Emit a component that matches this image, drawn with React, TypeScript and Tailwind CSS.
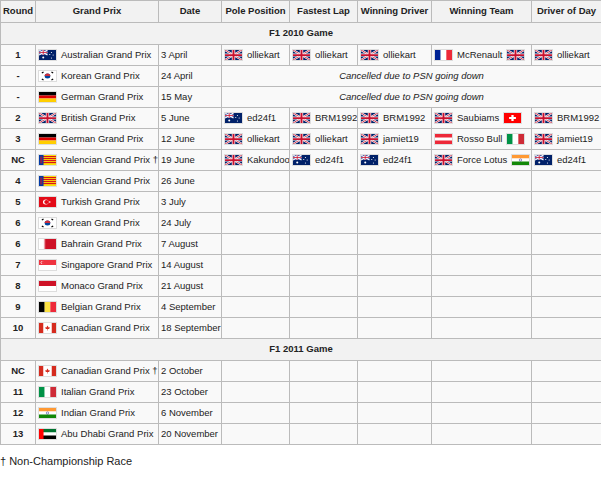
import React from "react";

const W = 19, H = 12;
function Flag({ c }: { c: string }) {
  const box = (children: React.ReactNode) => (
    <svg width={W} height={H} viewBox="0 0 30 20" className="inline-block align-middle border border-[#ddd] shrink-0" preserveAspectRatio="none">{children}</svg>
  );
  switch (c) {
    case "gb": return box(<>
      <rect width="30" height="20" fill="#012169" />
      <path d="M0 0L30 20M30 0L0 20" stroke="#fff" strokeWidth="4" />
      <path d="M0 0L30 20M30 0L0 20" stroke="#C8102E" strokeWidth="1.5" />
      <path d="M15 0V20M0 10H30" stroke="#fff" strokeWidth="6" />
      <path d="M15 0V20M0 10H30" stroke="#C8102E" strokeWidth="3.5" />
    </>);
    case "au": return box(<>
      <rect width="30" height="20" fill="#012169" />
      <rect width="15" height="10" fill="#3b4a9a" />
      <path d="M0 0L15 10M15 0L0 10" stroke="#fff" strokeWidth="2" />
      <path d="M7.5 0V10M0 5H15" stroke="#fff" strokeWidth="3" />
      <path d="M7.5 0V10M0 5H15" stroke="#C8102E" strokeWidth="1.5" />
      <circle cx="7.5" cy="15" r="1.8" fill="#fff" /><circle cx="22" cy="5" r="1" fill="#fff" /><circle cx="25" cy="10" r="1" fill="#fff" /><circle cx="22" cy="16" r="1" fill="#fff" /><circle cx="19" cy="9" r="1" fill="#fff" />
    </>);
    case "kr": return box(<>
      <rect width="30" height="20" fill="#fff" />
      <circle cx="15" cy="10" r="5" fill="#0047A0" /><path d="M10 10A5 5 0 0 1 20 10Z" fill="#CD2E3A" />
      <path d="M5 4l3-2M5 16l3 2M25 4l-3-2M25 16l-3 2" stroke="#000" strokeWidth="2" />
    </>);
    case "de": return box(<><rect width="30" height="7" fill="#000" /><rect y="7" width="30" height="6" fill="#DD0000" /><rect y="13" width="30" height="7" fill="#FFCE00" /></>);
    case "fr": return box(<><rect width="10" height="20" fill="#002395" /><rect x="10" width="10" height="20" fill="#fff" /><rect x="20" width="10" height="20" fill="#ED2939" /></>);
    case "it": return box(<><rect width="10" height="20" fill="#009246" /><rect x="10" width="10" height="20" fill="#fff" /><rect x="20" width="10" height="20" fill="#CE2B37" /></>);
    case "ch": return box(<><rect width="30" height="20" fill="#f00" /><path d="M13 4h4v4h4v4h-4v4h-4v-4h-4v-4h4z" fill="#fff" /></>);
    case "at": return box(<><rect width="30" height="20" fill="#ED2939" /><rect y="7" width="30" height="6" fill="#fff" /></>);
    case "in": return box(<><rect width="30" height="7" fill="#FF9933" /><rect y="7" width="30" height="6" fill="#fff" /><rect y="13" width="30" height="7" fill="#138808" /><circle cx="15" cy="10" r="2.2" fill="none" stroke="#000080" strokeWidth="0.8" /></>);
    case "va": return box(<>
      <rect width="30" height="20" fill="#FCDD09" />
      {[2, 6, 10, 14].map(y => <rect key={y} y={y} width="30" height="2.2" fill="#DA121A" />)}
      <rect width="8" height="20" fill="#0039A6" />
      <rect x="2" y="3" width="4" height="14" fill="#DA121A" opacity="0.6" />
    </>);
    case "tr": return box(<><rect width="30" height="20" fill="#E30A17" /><circle cx="12" cy="10" r="5" fill="#fff" /><circle cx="13.3" cy="10" r="4" fill="#E30A17" /><circle cx="19" cy="10" r="1.5" fill="#fff" /></>);
    case "bh": return box(<><rect width="30" height="20" fill="#CE1126" /><path d="M0 0H8L12 2L8 4L12 6L8 8L12 10L8 12L12 14L8 16L12 18L8 20H0Z" fill="#fff" /></>);
    case "sg": return box(<><rect width="30" height="10" fill="#EF3340" /><rect y="10" width="30" height="10" fill="#fff" /><circle cx="6" cy="5" r="3" fill="#fff" /><circle cx="7.2" cy="5" r="3" fill="#EF3340" /></>);
    case "mc": return box(<><rect width="30" height="10" fill="#CE1126" /><rect y="10" width="30" height="10" fill="#fff" /></>);
    case "be": return box(<><rect width="10" height="20" fill="#000" /><rect x="10" width="10" height="20" fill="#FAE042" /><rect x="20" width="10" height="20" fill="#ED2939" /></>);
    case "ca": return box(<><rect width="30" height="20" fill="#fff" /><rect width="7.5" height="20" fill="#D52B1E" /><rect x="22.5" width="7.5" height="20" fill="#D52B1E" /><path d="M15 5l2 4 2-1-1 4h-6l-1-4 2 1z" fill="#D52B1E" /><rect x="14.5" y="12" width="1" height="3" fill="#D52B1E" /></>);
    case "ae": return box(<><rect width="30" height="7" fill="#00732F" /><rect y="7" width="30" height="6" fill="#fff" /><rect y="13" width="30" height="7" fill="#000" /><rect width="8" height="20" fill="#FF0000" /></>);
  }
  return null;
}

const td = "border border-[#bbb] px-[2px] h-[21px] bg-[#f9f9f9] whitespace-nowrap overflow-hidden";
const F = ({ c, t, after }: { c: string; t: string; after?: string }) => (
  <span className="flex items-center gap-[4px]"><Flag c={c} /><span>{t}</span>{after && <Flag c={after} />}</span>
);

type R = { r: string; f: string; gp: string; d: string; cells?: ([string, string, string?] | null)[]; cancel?: boolean };
const rows2010: R[] = [
  { r: "1", f: "au", gp: "Australian Grand Prix", d: "3 April", cells: [["gb", "olliekart"], ["gb", "olliekart"], ["gb", "olliekart"], ["fr", "McRenault", "gb"], ["gb", "olliekart"]] },
  { r: "-", f: "kr", gp: "Korean Grand Prix", d: "24 April", cancel: true },
  { r: "-", f: "de", gp: "German Grand Prix", d: "15 May", cancel: true },
  { r: "2", f: "gb", gp: "British Grand Prix", d: "5 June", cells: [["au", "ed24f1"], ["gb", "BRM1992"], ["gb", "BRM1992"], ["gb", "Saubiams", "ch"], ["gb", "BRM1992"]] },
  { r: "3", f: "de", gp: "German Grand Prix", d: "12 June", cells: [["gb", "olliekart"], ["gb", "olliekart"], ["gb", "jamiet19"], ["at", "Rosso Bull", "it"], ["gb", "jamiet19"]] },
  { r: "NC", f: "va", gp: "Valencian Grand Prix †", d: "19 June", cells: [["gb", "Kakundoo"], ["au", "ed24f1"], ["au", "ed24f1"], ["gb", "Force Lotus", "in"], ["au", "ed24f1"]] },
  { r: "4", f: "va", gp: "Valencian Grand Prix", d: "26 June" },
  { r: "5", f: "tr", gp: "Turkish Grand Prix", d: "3 July" },
  { r: "6", f: "kr", gp: "Korean Grand Prix", d: "24 July" },
  { r: "6", f: "bh", gp: "Bahrain Grand Prix", d: "7 August" },
  { r: "7", f: "sg", gp: "Singapore Grand Prix", d: "14 August" },
  { r: "8", f: "mc", gp: "Monaco Grand Prix", d: "21 August" },
  { r: "9", f: "be", gp: "Belgian Grand Prix", d: "4 September" },
  { r: "10", f: "ca", gp: "Canadian Grand Prix", d: "18 September" },
];
const rows2011: R[] = [
  { r: "NC", f: "ca", gp: "Canadian Grand Prix †", d: "2 October" },
  { r: "11", f: "it", gp: "Italian Grand Prix", d: "23 October" },
  { r: "12", f: "in", gp: "Indian Grand Prix", d: "6 November" },
  { r: "13", f: "ae", gp: "Abu Dhabi Grand Prix", d: "20 November" },
];

function Row({ x }: { x: R }) {
  return (
    <tr>
      <td className={td + " text-center font-bold"}>{x.r}</td>
      <td className={td}><F c={x.f} t={x.gp} /></td>
      <td className={td}>{x.d}</td>
      {x.cancel ? (
        <td colSpan={5} className={td + " text-center italic"}>Cancelled due to PSN going down</td>
      ) : (
        [0, 1, 2, 3, 4].map(i => {
          const c = x.cells?.[i];
          return <td key={i} className={td}>{c ? <F c={c[0]} t={c[1]} after={c[2]} /> : null}</td>;
        })
      )}
    </tr>
  );
}

export default function App() {
  const th = "border border-[#bbb] bg-[#f2f2f2] font-bold text-center h-[22px] px-[2px] whitespace-nowrap overflow-hidden";
  return (
    <div className="w-[601px] h-[479px] bg-white text-[9.5px] text-[#222]" style={{ fontFamily: "'Liberation Sans', Arial, sans-serif" }}>
      <table className="border-collapse w-[601px] table-fixed">
        <colgroup>
          <col className="w-[35px]" /><col className="w-[123px]" /><col className="w-[63px]" /><col className="w-[68px]" /><col className="w-[68px]" /><col className="w-[74px]" /><col className="w-[100px]" /><col className="w-[70px]" />
        </colgroup>
        <thead>
          <tr>
            {["Round", "Grand Prix", "Date", "Pole Position", "Fastest Lap", "Winning Driver", "Winning Team", "Driver of Day"].map(h => <th key={h} className={th}>{h}</th>)}
          </tr>
        </thead>
        <tbody>
          <tr><td colSpan={8} className={th + " h-[20px]"}>F1 2010 Game</td></tr>
          {rows2010.map((x, i) => <Row key={i} x={x} />)}
          <tr><td colSpan={8} className={th}>F1 2011 Game</td></tr>
          {rows2011.map((x, i) => <Row key={i} x={x} />)}
        </tbody>
      </table>
      <div className="mt-[8px] text-[11px]">† Non-Championship Race</div>
    </div>
  );
}
